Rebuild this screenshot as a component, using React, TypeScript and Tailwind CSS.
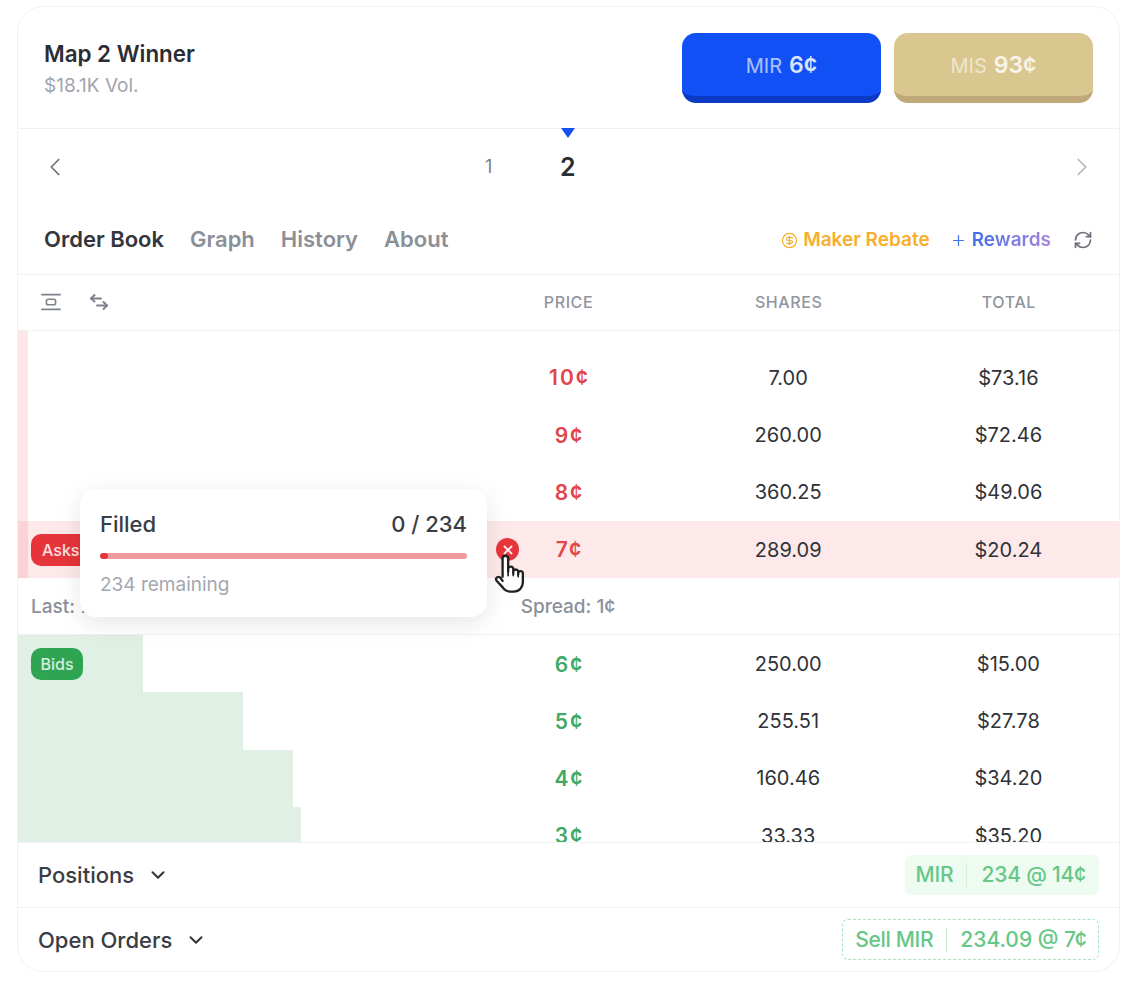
import { ChevronLeft, ChevronRight, ChevronDown, CircleDollarSign, Plus, RefreshCw, AlignVerticalSpaceAround, X } from "lucide-react";

const asks = [
  { p: "10¢", s: "7.00", t: "$73.16" },
  { p: "9¢", s: "260.00", t: "$72.46" },
  { p: "8¢", s: "360.25", t: "$49.06" },
];
const bids = [
  { p: "6¢", s: "250.00", t: "$15.00", w: 125 },
  { p: "5¢", s: "255.51", t: "$27.78", w: 225 },
  { p: "4¢", s: "160.46", t: "$34.20", w: 275 },
  { p: "3¢", s: "33.33", t: "$35.20", w: 283 },
];

function Row({ p, s, t, color, bar, barClass, highlight, children }: { p: string; s: string; t: string; color: string; bar?: number; barClass?: string; highlight?: boolean; children?: React.ReactNode }) {
  return (
    <div className={`relative grid h-[57.3px] shrink-0 grid-cols-5 items-center text-[20px] text-[#2f3238] ${highlight ? "bg-[#fde8ea]" : ""}`}>
      {bar !== undefined && <div className={`absolute top-0 bottom-0 left-0 ${barClass}`} style={{ width: bar }} />}
      <div className="relative col-span-2 h-full">{children}</div>
      <div className={`relative pt-[1px] pl-[2px] text-center text-[21px] font-semibold tracking-[2px] ${color}`}>{p}</div>
      <div className="relative pr-[1px] text-center">{s}</div>
      <div className="relative pr-[1px] text-center">{t}</div>
    </div>
  );
}

export default function App() {
  return (
    <div className="h-[986px] w-[1140px] bg-white pt-[6px] pl-[17px] font-['Inter',sans-serif]">
      <div className="relative flex h-[966px] w-[1103px] flex-col overflow-hidden rounded-[26px] border border-[#f1f2f4] bg-white">
        {/* header */}
        <div className="flex h-[122px] shrink-0 items-center justify-between border-b border-[#eff0f2] pr-[26px] pb-[3px] pl-[26px]">
          <div className="mt-[4px]">
            <div className="text-[22.4px] leading-[30px] font-semibold text-[#2a2d33]">Map 2 Winner</div>
            <div className="mt-[5px] text-[19px] leading-[24px] text-[#a0a5ad]">$18.1K Vol.</div>
          </div>
          <div className="mt-[3px] flex gap-[13px]">
            <div className="flex h-[70px] w-[199px] items-center justify-center gap-[7px] rounded-[14px] border-b-[7px] border-[#0b3bc4] bg-[#1150f4] pt-[3px] text-white">
              <span className="text-[20px] text-white/65">MIR</span>
              <span className="text-[23px] font-semibold text-white/85">6¢</span>
            </div>
            <div className="flex h-[70px] w-[199px] items-center justify-center gap-[7px] rounded-[14px] border-b-[7px] border-[#bfa97a] bg-[#d9c78f] pt-[3px]">
              <span className="text-[20px] text-white/55">MIS</span>
              <span className="text-[23px] font-semibold text-white/80">93¢</span>
            </div>
          </div>
        </div>

        {/* pager */}
        <div className="relative flex h-[76px] shrink-0 items-center justify-between pr-[22px] pl-[22px] pb-[1px]">
          <ChevronLeft className="h-[30px] w-[30px] text-[#6b7079]" strokeWidth={1.4} />
          <ChevronRight className="h-[30px] w-[30px] text-[#b4b8bf]" strokeWidth={1.4} />
          <div className="absolute top-[-1px] left-[543px] h-0 w-0 border-t-[10px] border-r-[7px] border-l-[7px] border-t-[#1553f0] border-r-transparent border-l-transparent" />
          <span className="absolute top-[27px] left-[467px] text-[18px] leading-[22px] text-[#7b808a]">1</span>
          <span className="absolute top-[23px] left-[542px] text-[25px] leading-[30px] font-semibold text-[#2a2d33]">2</span>
        </div>

        {/* tabs */}
        <div className="flex h-[70px] shrink-0 items-center justify-between border-b border-[#f1f2f4] pr-[26px] pl-[26px]">
          <div className="flex items-center gap-[26px] text-[22px] font-semibold text-[#8a8f98]">
            <span className="text-[#33363c]">Order Book</span>
            <span>Graph</span>
            <span>History</span>
            <span>About</span>
          </div>
          <div className="flex items-center pt-[1px] text-[19px] font-semibold">
            <CircleDollarSign className="mr-[5px] h-[17px] w-[17px] text-[#f9ae2b]" strokeWidth={1.75} />
            <span className="text-[#f9ae2b]">Maker Rebate</span>
            <Plus className="mr-[5px] ml-[20px] h-[17px] w-[17px] text-[#4274ea]" strokeWidth={1.75} />
            <span className="bg-linear-to-r from-[#3f6fe8] to-[#a583dd] bg-clip-text text-transparent">Rewards</span>
            <RefreshCw className="ml-[22px] h-[20px] w-[20px] text-[#6b7079]" strokeWidth={2} />
          </div>
        </div>

        {/* column header */}
        <div className="grid h-[56px] shrink-0 grid-cols-5 items-center border-b border-[#f1f2f4] pb-[1px] text-[16px] font-medium tracking-[0.6px] text-[#90959e]">
          <div className="col-span-2 flex items-center gap-[27px] pl-[22px]">
            <AlignVerticalSpaceAround className="h-[22px] w-[22px] text-[#7d828b]" strokeWidth={1.75} />
            <svg viewBox="0 0 20 18" className="h-[18px] w-[20px] text-[#7d828b]" fill="none" stroke="currentColor" strokeWidth="2" strokeLinecap="round" strokeLinejoin="round">
              <path d="M5.5 2 2 5.5 5.5 8.5" />
              <path d="M2 5.5h10" />
              <path d="M14.5 9l3.5 3.5-3.5 3.5" />
              <path d="M8 12.5h10" />
            </svg>
          </div>
          <div className="text-center">PRICE</div>
          <div className="text-center">SHARES</div>
          <div className="text-center">TOTAL</div>
        </div>

        {/* book */}
        <div className="relative flex min-h-0 flex-1 flex-col overflow-hidden">
          <div className="relative h-[18px] shrink-0"><div className="absolute inset-y-0 left-0 w-[10px] bg-[#fde6e8]" /></div>
          {asks.map((r) => (
            <Row key={r.p} {...r} color="text-[#e2454a]" bar={10} barClass="bg-[#fde6e8]" />
          ))}
          <Row p="7¢" s="289.09" t="$20.24" color="text-[#e2454a]" bar={10} barClass="bg-[#fbd3d6]" highlight>
            <div className="absolute top-[13px] left-[13px] flex h-[32px] w-[64px] items-center rounded-[10px] bg-[#e5353b] pl-[11px] text-[16px] font-medium text-white/85">Asks</div>
          </Row>
          <div className="grid h-[57px] shrink-0 grid-cols-5 items-center border-b border-[#f1f2f4] pt-[2px] text-[19px] font-medium text-[#8a8f98]">
            <div className="col-span-2 pl-[13px]">Last: 7¢</div>
            <div className="pr-[1px] text-center whitespace-nowrap">Spread: 1¢</div>
          </div>
          {bids.map((r) => (
            <Row key={r.p} {...r} color="text-[#3fa965]" bar={r.w} barClass="bg-[#e0f0e4]">
              {r.p === "6¢" && (
                <div className="absolute top-[13px] left-[13px] flex h-[32px] w-[52px] items-center justify-center rounded-[10px] bg-[#2fa553] text-[16px] font-medium text-white/80">Bids</div>
              )}
            </Row>
          ))}
        </div>

        {/* footer */}
        <div className="flex h-[66px] shrink-0 items-center justify-between border-t border-b border-[#f1f2f4] pr-[20px] pl-[20px]">
          <div className="flex items-center gap-[13px] text-[22px] font-medium text-[#3a3d43]">
            Positions
            <ChevronDown className="h-[22px] w-[22px] text-[#34373d]" strokeWidth={2.25} />
          </div>
          <div className="flex h-[40px] items-center rounded-[6px] bg-[#eefbf1] pr-[13px] pl-[11px] text-[21px] font-medium tracking-[-0.2px] text-[#66c787]">
            <span className="pr-[13px]">MIR</span>
            <span className="h-[24px] w-px bg-[#d5efdc]" />
            <span className="pl-[14px]">234 @ 14¢</span>
          </div>
        </div>
        <div className="flex h-[63px] shrink-0 items-center justify-between pr-[20px] pl-[20px]">
          <div className="flex items-center gap-[13px] pt-[1px] text-[22px] font-medium text-[#3a3d43]">
            Open Orders
            <ChevronDown className="h-[22px] w-[22px] text-[#34373d]" strokeWidth={2.25} />
          </div>
          <div className="flex h-[41px] items-center rounded-[6px] border border-dashed border-[#a9e3bc] pr-[11px] pl-[12px] text-[21px] font-medium text-[#66c787]">
            <span className="pr-[13px] tracking-[-0.3px]">Sell MIR</span>
            <span className="h-[24px] w-px bg-[#c5ebd1]" />
            <span className="pl-[13px]">234.09 @ 7¢</span>
          </div>
        </div>

        {/* popover */}
        <div className="absolute top-[482px] left-[62px] h-[128px] w-[407px] rounded-[16px] bg-white px-[20px] pt-[21px] shadow-[0_6px_24px_rgba(0,0,0,0.1)]">
          <div className="flex items-center justify-between text-[22px] leading-[28px] font-medium text-[#3a3d43]">
            <span>Filled</span>
            <span>0 / 234</span>
          </div>
          <div className="mt-[15px] h-[6px] overflow-hidden rounded-full bg-[#f09a9d]">
            <div className="h-full w-[8px] rounded-full bg-[#e5353b]" />
          </div>
          <div className="mt-[14px] text-[19px] leading-[24px] text-[#a3a7af]">234 remaining</div>
        </div>

        {/* cancel + cursor */}
        <div className="absolute top-[531px] left-[478px] flex h-[23px] w-[23px] items-center justify-center rounded-full bg-[#e5353b] text-white/90">
          <X className="h-[14px] w-[14px]" strokeWidth={3.25} />
        </div>
        <svg viewBox="0 0 30 40" className="absolute top-[546px] left-[475px] h-[43px] w-[32px]" fill="#fff" stroke="#222" strokeWidth="2.2" strokeLinecap="round" strokeLinejoin="round">
          <path d="M9 22V5a2.6 2.6 0 0 1 5.2 0v12.5V15a2.4 2.4 0 0 1 4.8 0v4-2a2.4 2.4 0 0 1 4.6 0v3-1a2.2 2.2 0 0 1 4.4 0v8c0 5-3.2 9-8.5 9h-3.2c-3.3 0-5.3-1.3-7-3.7L3.2 25.6c-1.4-2.6 2.2-4.6 3.9-2.3L9 26" />
          <path d="M14.2 17.5V21M19 19v2M23.6 20v2" fill="none" strokeWidth="1.6" />
        </svg>
      </div>
    </div>
  );
}
